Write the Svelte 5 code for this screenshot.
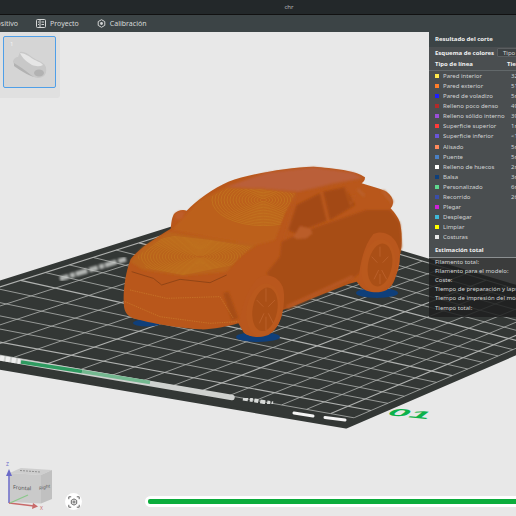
<script>
  const tabs = [
    { label: 'Dispositivo', icon: null },
    { label: 'Proyecto', icon: 'project' },
    { label: 'Calibración', icon: 'calib' },
  ];

  const lineTypes = [
    ['Pared interior', '#ffe94a', '32m 10s'],
    ['Pared exterior', '#ff7d2a', '51m 22s'],
    ['Pared de voladizo', '#1e1eff', '5m 12s'],
    ['Relleno poco denso', '#b02a2a', '49m 3s'],
    ['Relleno sólido interno', '#9a4fd8', '39m 41s'],
    ['Superficie superior', '#ff3a3a', '1m 20s'],
    ['Superficie inferior', '#6a55d8', '<1s'],
    ['Alisado', '#ff8a5c', '5m 8s'],
    ['Puente', '#4a80c4', '5m 2s'],
    ['Relleno de huecos', '#ffffff', '2m 9s'],
    ['Balsa', '#0f3f7a', '3m 4s'],
    ['Personalizado', '#5ed88e', '6m 1s'],
    ['Recorrido', '#3a4ea8', '26m 7s'],
    ['Plegar', '#d020d8', ''],
    ['Desplegar', '#3fb8d8', ''],
    ['Limpiar', '#ffff00', ''],
    ['Costuras', '#e8e8e8', ''],
  ];

  const estimates = [
    'Filamento total:',
    'Filamento para el modelo:',
    'Coste:',
    'Tiempo de preparación y lapso de tiempo:',
    'Tiempo de impresión del modelo:',
    'Tiempo total:',
  ];

  // plate corners on screen: back, right, front, left
  const quad = [[245, 205], [608, 314], [346, 427], [-178, 338]];

  function homography([p0, p1, p2, p3]) {
    const dx1 = p1[0] - p2[0], dx2 = p3[0] - p2[0], sx = p0[0] - p1[0] + p2[0] - p3[0];
    const dy1 = p1[1] - p2[1], dy2 = p3[1] - p2[1], sy = p0[1] - p1[1] + p2[1] - p3[1];
    const den = dx1 * dy2 - dx2 * dy1;
    const g = (sx * dy2 - dx2 * sy) / den;
    const h = (dx1 * sy - sx * dy1) / den;
    const a = p1[0] - p0[0] + g * p1[0], b = p3[0] - p0[0] + h * p3[0];
    const d = p1[1] - p0[1] + g * p1[1], e = p3[1] - p0[1] + h * p3[1];
    return (u, v) => {
      const w = g * u + h * v + 1;
      return [(a * u + b * v + p0[0]) / w, (d * u + e * v + p0[1]) / w];
    };
  }

  const project = homography(quad);
  const cells = 16;
  const gridLines = [];
  for (let i = 0; i <= cells; i++) {
    const t = 0.015 + (i / cells) * 0.96;
    const a = project(t, 0.015), b = project(t, 0.94);
    const c = project(0.015, t * 0.965), d = project(0.975, t * 0.965);
    gridLines.push({ a, b }, { a: c, b: d });
  }
  const platePoints = quad.map((p) => p.join(',')).join(' ');

  const silhouette =
    'M72 470C68 430 75 370 92 328C110 300 170 262 212 236C214 222 214 205 222 192C232 180 250 178 260 182C290 150 340 115 385 95C450 72 560 52 640 50C700 54 770 62 795 82C795 92 790 96 785 100C810 108 840 115 860 125C880 140 885 160 872 175C885 190 900 205 903 235C908 270 905 310 892 340C890 375 885 405 860 420C835 432 800 428 782 410L770 395 745 402 548 480C545 510 530 540 505 555C480 565 450 562 432 548L415 520C380 530 330 540 300 538C240 535 150 520 100 505C85 498 75 490 72 470Z';

  // moire rings the layer lines leave on shallow surfaces
  const hoodRings = Array.from({ length: 20 }, (_, i) => 14 + i * 9);
  const screenRings = Array.from({ length: 17 }, (_, i) => 10 + i * 9);
</script>

<div class="app">
  <header class="titlebar">chr</header>

  <nav class="toolbar">
    {#each tabs as tab}
      <div class="tab">
        {#if tab.icon === 'project'}
          <svg width="10" height="9" viewBox="0 0 10 9">
            <rect x=".5" y=".5" width="9" height="8" rx="1" fill="none" stroke="#d4d6d6" />
            <path d="M4 .5v8M5.5 3h2.500M5.500 5.500h2.500M2 3h1M2 5.500h1" stroke="#d4d6d6" />
          </svg>
        {:else if tab.icon === 'calib'}
          <svg width="9" height="9" viewBox="0 0 9 9">
            <path d="M4.500 .7 7.800 2.600v3.800L4.500 8.300 1.200 6.400V2.600z" fill="none" stroke="#d4d6d6" />
            <circle cx="4.500" cy="4.500" r="1.400" fill="#d4d6d6" />
          </svg>
        {/if}
        <span>{tab.label}</span>
      </div>
    {/each}
  </nav>

  <main class="viewport">
    <svg class="scene" viewBox="0 32 516 484" width="516" height="484">
      <defs>
        <pattern id="layers" width="2.400" height="1.600" patternUnits="userSpaceOnUse" patternTransform="rotate(-12)">
          <rect width="2.400" height=".7" fill="#000" opacity=".07" />
        </pattern>
        <clipPath id="hood-clip"><path d="M110 320 200 255 330 270 455 290 400 345 250 375 140 355Z" /></clipPath>
        <clipPath id="screen-clip"><path d="M300 160 380 115 480 118 585 130 555 190 525 268 470 280 330 262Z" /></clipPath>
        <filter id="soft"><feGaussianBlur stdDeviation=".6" /></filter>
        <filter id="mark-soft"><feGaussianBlur stdDeviation=".9" /></filter>
        <filter id="car-soft"><feGaussianBlur stdDeviation="2.500" /></filter>
      </defs>

      <polygon points={platePoints} fill="#333735" stroke="#333735" stroke-width="3" stroke-linejoin="round" />
      {#each gridLines as line, i}
        <line
          x1={line.a[0]} y1={line.a[1]} x2={line.b[0]} y2={line.b[1]}
          stroke="#b0b2b0" stroke-width={i % 10 < 2 ? 1.1 : 0.8}
        />
      {/each}

      <!-- printed marks on the plate -->
      <path d="M60 279 126 259" stroke="#c8cac8" stroke-width="5" stroke-dasharray="9 1.500 5 1 12 2" opacity=".85" filter="url(#mark-soft)" />
      <path d="M0 358 232 397.500" stroke="#cfd1cf" stroke-width="5.500" stroke-linecap="round" />
      <path d="M0 358 20 361.500" stroke="#eeeeee" stroke-width="5" stroke-dasharray="4 2" />
      <path d="M21 362 82 371.500" stroke="#2e9a60" stroke-width="3.500" />
      <path d="M82 371.500 150 382.500" stroke="#74b890" stroke-width="3.500" />
      <path d="M243 398.500 273 403.500" stroke="#d8dad8" stroke-width="4" stroke-dasharray="5 2 3 1.500 4 2" filter="url(#soft)" />
      <path d="M294 413 313 416M325 417.500 345 420" stroke="#f4f4f4" stroke-width="3" stroke-linecap="round" />
      <text class="plate-no" transform="matrix(1.800 .17 -.6 .46 385 415)">01</text>

      <!-- raft under the wheels -->
      <ellipse cx="147" cy="323" rx="14" ry="3.500" fill="#0f3f7a" />
      <ellipse cx="258" cy="337" rx="22" ry="5" fill="#0f3f7a" />
      <ellipse cx="377" cy="293" rx="21" ry="5" fill="#0f3f7a" />

      <!-- car, drawn in units of 1/3 px -->
      <g transform="translate(100 150) scale(.33333)">
        <path d={silhouette} fill="#bf5a1c" />
        <g filter="url(#car-soft)">
          <!-- side of the body -->
          <path d="M545 275 640 235 800 180 870 180 900 220 905 290 885 340 800 350 745 398 550 478 535 420 500 370 540 320Z" fill="#ac4f15" />
          <!-- roof -->
          <path d="M375 112 500 68 640 52 760 68 790 85 700 100 600 125 480 115Z" fill="#c0623a" />
          <!-- windscreen and bonnet -->
          <path d="M215 240 300 150 375 112 480 115 590 128 555 190 525 270 470 285 330 262Z" fill="#c2641c" />
          <path d="M90 335 130 290 205 245 330 265 470 285 420 320 380 365 250 378 130 360Z" fill="#c0661c" />
          <!-- side windows -->
          <path d="M590 165 660 130 680 212 585 250 565 240Z" fill="#a84b12" />
          <path d="M670 125 735 112 765 165 690 210Z" fill="#a84b12" />
          <path d="M662 128 682 212M735 115 752 165 762 135M590 128 555 265M600 125 790 85" stroke="#bd5c20" stroke-width="4" fill="none" />
          <path d="M580 260 600 228 630 235 638 250 620 265 590 268Z" fill="#c0602a" />
          <path d="M775 120 790 135M850 125 875 155" stroke="#c0622a" stroke-width="10" stroke-linecap="round" />
          <path d="M560 472 760 380" stroke="#bb5a20" stroke-width="14" />
          <path d="M370 430 395 510 415 505 385 425Z" fill="#ac4f15" />
          <path d="M224 192 240 184 256 186 246 206 228 210Z" fill="#c4602a" />
        </g>
        <g clip-path="url(#hood-clip)" fill="none" stroke="#d6a62a" stroke-width="1.700" opacity=".42">
          {#each hoodRings as r}
            <ellipse cx="300" cy="320" rx={r} ry={r * 0.36} />
          {/each}
        </g>
        <g clip-path="url(#screen-clip)" fill="none" stroke="#d6a62a" stroke-width="1.700" opacity=".48">
          {#each screenRings as r}
            <ellipse cx="490" cy="150" rx={r} ry={r * 0.5} />
          {/each}
        </g>
        <!-- wheels -->
        <path d="M418 520C425 470 440 420 470 388 490 370 530 370 548 410 558 440 550 500 530 530 510 558 450 565 432 548Z" fill="#bf5a1e" />
        <ellipse cx="490" cy="480" rx="50" ry="80" transform="rotate(10 490 480)" fill="#c05c1e" />
        <ellipse cx="495" cy="478" rx="37" ry="66" transform="rotate(10 495 478)" fill="#b05217" />
        <path d="M498 415V455M498 500V540M470 450 490 470M525 450 505 470M478 520 492 490M520 520 505 490" stroke="#c0622a" stroke-width="3" />
        <path d="M775 395C780 340 790 290 820 252 845 240 885 250 898 300 905 340 890 390 860 418 835 430 795 425 775 395Z" fill="#bf5a1e" />
        <ellipse cx="835" cy="347" rx="50" ry="80" transform="rotate(10 835 347)" fill="#c05c1e" />
        <ellipse cx="840" cy="345" rx="36" ry="65" transform="rotate(10 840 345)" fill="#b05217" />
        <path d="M840 290V320M840 372V402M815 320 832 338M865 320 848 338M822 388 836 360M860 388 845 360" stroke="#c0622a" stroke-width="3" />
        <!-- nose -->
        <path d="M95 365 160 385 185 405 240 388 330 398 380 375" fill="none" stroke="#8f4316" stroke-width="2.500" />
        <path d="M90 420 200 445 360 440 400 505M75 455 180 500 330 520 415 515" fill="none" stroke="#d2822e" stroke-width="2" stroke-dasharray="4 3" />
        <path d={silhouette} fill="url(#layers)" />
      </g>

      <!-- orientation gizmo -->
      <g class="gizmo">
        <path d="M9.500 473 21 468 52 470 41 475Z" fill="#cecece" />
        <path d="M41 475 52 470 52 499 41 503.500Z" fill="#c0c0c0" />
        <path d="M9.500 473 41 475 41 503.500 9.500 502Z" fill="#cacaca" />
        <path d="M20 470.500 40 472" stroke="#666" stroke-width="1" stroke-dasharray="2 1" opacity=".6" />
        <text class="cube-label" transform="matrix(1 .08 0 1 13 489)">Frontal</text>
        <text class="cube-label small" transform="matrix(1 -.25 0 1 39 490)">Right</text>
        <path d="M9 503V474" stroke="#6a6ac8" stroke-width="1.500" />
        <path d="M9 469 12 476H6Z" fill="#6a6ac8" />
        <path d="M9 503 34 506" stroke="#c86a6a" stroke-width="1.500" />
        <path d="M38 506.500 32 509 33 503Z" fill="#c86a6a" />
        <path d="M10 503 28 495" stroke="#8ac88a" stroke-width="1.200" />
        <text class="axis z" x="6" y="466">Z</text>
        <text class="axis x" x="40" y="510">X</text>
      </g>
    </svg>

    <aside class="plates">
      <div class="thumb">
        <span>1</span>
        <svg width="36" height="30" viewBox="0 0 36 30">
          <g filter="url(#soft)">
            <path d="M1 12C1 9 4 7 6 7L8 2C12 1 16 4 20 7 24 10 29 11 32 14 35 17 35 23 32 26 28 29 23 28 19 26 14 22 8 19 3 17Z" fill="#c8c8c8" />
            <path d="M8 3C12 3 17 6 21 9 24 11 29 12 31 15 27 17 23 16 20 15 15 12 10 8 8 3Z" fill="#e6e6e6" />
            <path d="M2 13C7 16 13 20 19 25L22 27C15 25 8 20 2 16Z" fill="#b2b2b2" />
            <ellipse cx="27" cy="23" rx="5" ry="3.500" fill="#b2b2b2" />
          </g>
        </svg>
      </div>
    </aside>

    <aside class="results">
      <div class="results-top">
        <h2 class="results-title">Resultado del corte</h2>
        <div class="scheme">
          <strong>Esquema de colores</strong>
          <div class="select">
            <svg width="6" height="4" viewBox="0 0 6 4"><path d="M.5.8 3 3 5.500.8" fill="none" stroke="#ddd" stroke-width=".8" /></svg>
            <span>Tipo de línea</span>
          </div>
        </div>
        <div class="table-head"><span>Tipo de línea</span><span class="time">Tiempo</span></div>
        <ul>
          {#each lineTypes as [name, color, time]}
            <li>
              <i style:background={color}></i>
              <span>{name}</span>
              <span class="time">{time}</span>
            </li>
          {/each}
        </ul>
        <h3>Estimación total</h3>
      </div>
      <div class="estimate">
        {#each estimates as row}
          <p>{row}</p>
        {/each}
      </div>
    </aside>

    <div class="bottom">
      <button class="fit" aria-label="Ajustar vista">
        <svg width="12" height="12" viewBox="0 0 12 12" fill="none" stroke="#555" stroke-width=".9">
          <path d="M.8 3.200V.8h2.400M8.800.8h2.400v2.400M11.200 8.800v2.400H8.800M3.200 11.200H.8V8.800" />
          <path d="M6 2.900 8.700 4.400v3.200L6 9.100 3.300 7.600V4.400z" />
          <circle cx="6" cy="6" r="1.100" />
        </svg>
      </button>
      <div class="progress"><div class="fill"></div></div>
    </div>
  </main>
</div>

<style>
  :global(body) {
    margin: 0;
    background: #e8e8e8;
  }

  .app {
    width: 516px;
    height: 516px;
    display: flex;
    flex-direction: column;
    overflow: hidden;
    font-family: 'Noto Sans', sans-serif;
  }

  .titlebar {
    height: 14px;
    padding-left: 62px;
    border-bottom: 1px solid #111;
    background: #23282a;
    color: #b8baba;
    font-size: 6px;
    line-height: 14px;
    text-align: center;
  }

  .toolbar {
    height: 17px;
    display: flex;
    align-items: center;
    gap: 18px;
    margin-left: -18px;
    background: #3c4446;
    color: #d8dada;
    font-size: 7px;
  }

  .tab {
    display: flex;
    align-items: center;
    gap: 4px;
    white-space: nowrap;
  }

  .viewport {
    position: relative;
    flex: 1;
    overflow: hidden;
    background: #e8e8e8;
  }

  .scene {
    position: absolute;
    inset: 0;
  }

  .plate-no {
    fill: #0cb14a;
    font-family: 'Liberation Sans', sans-serif;
    font-size: 21px;
    font-weight: 700;
  }

  .cube-label {
    fill: #555;
    font-size: 5.500px;
  }

  .cube-label.small {
    font-size: 4.500px;
  }

  .axis {
    font-size: 5px;
  }

  .axis.z {
    fill: #6a6ac8;
  }

  .axis.x {
    fill: #c86a6a;
  }

  .plates {
    position: absolute;
    top: 0;
    left: 0;
    width: 60px;
    height: 66px;
    padding: 4px 3px 0 3px;
    box-sizing: border-box;
    border-bottom-right-radius: 3px;
    background: #e0e0e0;
  }

  .thumb {
    position: relative;
    width: 53px;
    height: 52px;
    display: flex;
    align-items: center;
    justify-content: center;
    box-sizing: border-box;
    border: 1px solid #4f9fe8;
    border-radius: 2px;
    background: #d5d5d5;
  }

  .thumb span {
    position: absolute;
    top: 3px;
    left: 6px;
    color: #f4f4f4;
    font-size: 6px;
  }

  .thumb svg {
    margin-top: 6px;
  }

  .results {
    position: absolute;
    top: 0;
    left: 429px;
    width: 87px;
    overflow: hidden;
    color: #d2d4d4;
    font-size: 6px;
    white-space: nowrap;
  }

  .results-top {
    background: #4a4e50;
  }

  .results-title {
    height: 15.400px;
    margin: 0;
    padding-left: 6px;
    background: #3c4446;
    color: #f0f0f0;
    font-size: 6px;
    font-weight: 700;
    line-height: 15.400px;
  }

  .scheme {
    height: 11px;
    display: flex;
    align-items: center;
    justify-content: space-between;
    padding-left: 6px;
    color: #f0f0f0;
    font-size: 6px;
  }

  .select {
    width: 40px;
    height: 9px;
    flex: none;
    display: flex;
    align-items: center;
    gap: 2px;
    margin-right: -21px;
    padding-left: 3px;
    box-sizing: border-box;
    border: 1px solid #5a5e60;
    border-radius: 1px;
    background: #3e4244;
  }

  .select span {
    color: #d2d4d4;
  }

  .table-head {
    height: 12px;
    display: flex;
    align-items: center;
    padding-left: 6px;
    border-bottom: 1px solid #62686a;
    color: #f0f0f0;
    font-weight: 700;
  }

  .table-head > span:first-child {
    width: 72px;
    flex: none;
  }

  ul {
    margin: 0;
    padding: 0 0 0 6px;
    list-style: none;
  }

  li {
    height: 10.030px;
    display: flex;
    align-items: center;
    gap: 4px;
    line-height: 10px;
  }

  li i {
    width: 4px;
    height: 4px;
    flex: none;
  }

  li span:first-of-type {
    width: 64px;
    flex: none;
    overflow: hidden;
  }

  h3 {
    height: 14px;
    margin: 1px 0 0;
    padding-left: 6px;
    border-bottom: 1px solid #8c9092;
    color: #f0f0f0;
    font-size: 6px;
    line-height: 14px;
  }

  .estimate {
    padding: 0 0 4px 6px;
    background: rgba(30, 32, 32, 0.86);
  }

  .estimate p {
    height: 9.200px;
    margin: 0;
    line-height: 9.200px;
  }

  .bottom {
    position: absolute;
    top: 461px;
    left: 65px;
    right: 0;
    display: flex;
    align-items: center;
    gap: 63px;
  }

  .fit {
    width: 17px;
    height: 17px;
    flex: none;
    display: flex;
    align-items: center;
    justify-content: center;
    padding: 0;
    border: 0;
    border-radius: 50%;
    background: #fff;
  }

  .progress {
    flex: 1;
    height: 10.500px;
    margin-right: -10px;
    padding: 2.500px 3px;
    box-sizing: border-box;
    border-radius: 6px;
    background: #fff;
  }

  .fill {
    height: 100%;
    border-radius: 2px;
    background: #0aad3c;
  }
</style>
